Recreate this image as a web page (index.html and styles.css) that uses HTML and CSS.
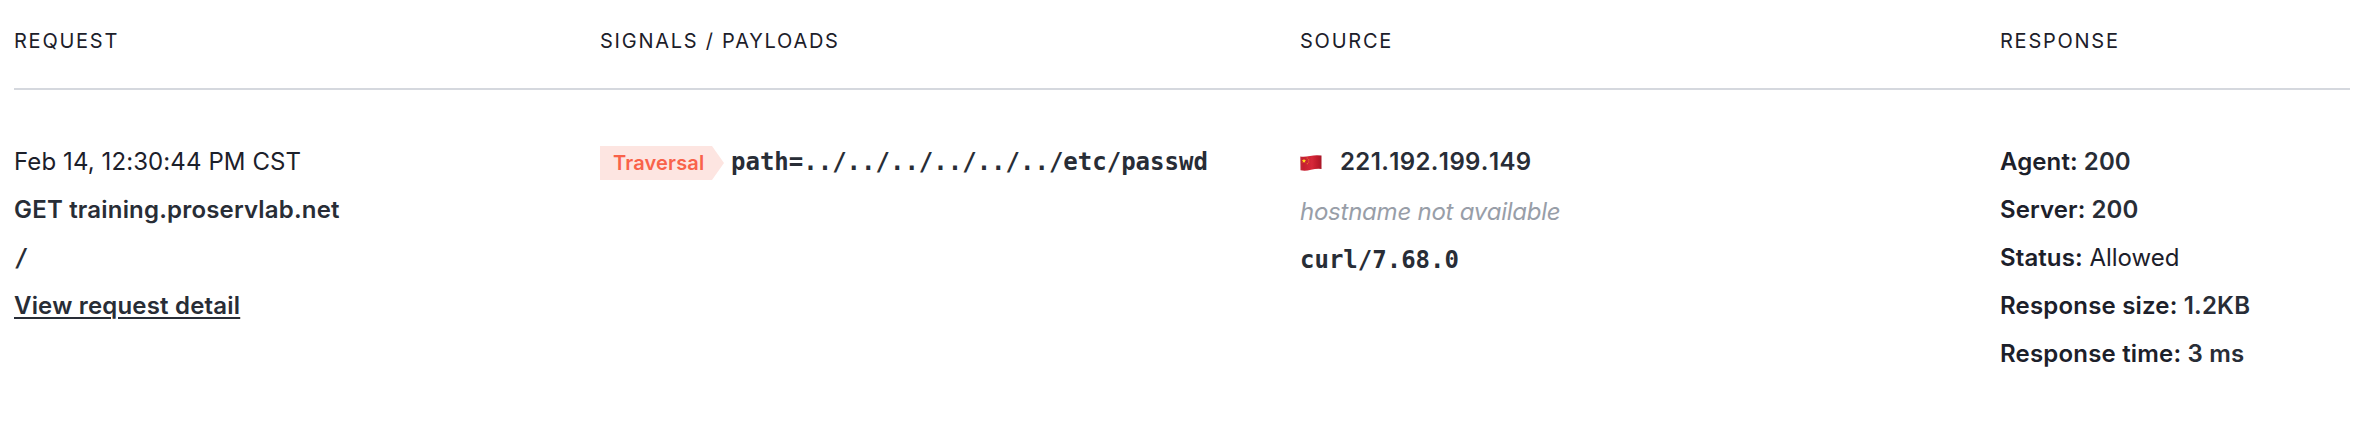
FILE: index.html
```html
<!DOCTYPE html>
<html lang="en"><head><meta charset="utf-8"><title>Requests</title><link rel="stylesheet" href="styles.css"></head>
<body>
<main class="requests">
<header class="grid head"><div class="request">REQUEST</div><div class="signals">SIGNALS / PAYLOADS</div><div class="source">SOURCE</div><div class="response">RESPONSE</div></header>
<section class="grid row">
<div class="request"><p class="date">Feb 14, 12:30:44 PM CST</p><p class="strong value">GET training.proservlab.net</p><p class="mono">/</p><p><a class="strong link" href="#">View request detail</a></p></div>
<div class="signals"><p class="payload"><span class="tag">Traversal</span><code class="mono">path=../../../../../../etc/passwd</code></p></div>
<div class="source"><p class="ip"><svg class="flag" viewBox="0 0 22 16"><defs><linearGradient id="cloth"><stop offset="0" stop-color="#c02a3a"/><stop offset=".15" stop-color="#c61f2f"/><stop offset=".55" stop-color="#d6283a"/><stop offset=".8" stop-color="#c01b2c"/><stop offset="1" stop-color="#a81728"/></linearGradient></defs><path fill="url(#cloth)" d="M.3 1.500Q4 2.300 10 1T21.500.6V14Q17 13.300 11 14.800T.5 15.200Z"/><path fill="#ffd51e" d="m4 3.700.6 1.300 1.400.2-1 1 .2 1.500L4 7l-1.300.7.2-1.500-1-1 1.500-.2z"/><g fill="#e88725"><circle cx="7.200" cy="3" r=".6"/><circle cx="8.700" cy="4.800" r=".6"/><circle cx="8.700" cy="7" r=".6"/><circle cx="7.300" cy="8.700" r=".6"/></g></svg><span class="strong value address">221.192.199.149</span></p><p class="hostname">hostname not available</p><p class="mono agent">curl/7.68.0</p></div>
<div class="response"><p class="strong short">Agent: <span class="value">200</span></p><p class="strong short">Server: <span class="value">200</span></p><p><span class="strong short">Status:</span> <span class="allowed">Allowed</span></p><p class="strong">Response size: <span class="value">1.2KB</span></p><p class="strong">Response time: <span class="value">3 ms</span></p></div>
</section>
</main>
</body></html>
```
FILE: styles.css
```css
*{box-sizing:border-box}
body{margin:0;background:#fff;color:#1c202a;font:24px/48px Inter,sans-serif}
.requests{padding:0 10px 0 14px}
.grid{display:grid;grid-template-columns:586px 700px 700px 1fr}
.head{height:90px;padding-top:17px;border-bottom:2px solid #d5d8de;font-size:20px;letter-spacing:1.75px}
.row{padding-top:48px}
p{margin:0;height:48px;white-space:nowrap}
.date{letter-spacing:.1px}
.strong{font-weight:600;letter-spacing:.19px}
.short{letter-spacing:.1px}
.value,.link,.mono{color:#282d36}
.link{text-decoration-thickness:2px;text-underline-offset:3px}
.mono{font:bold 24px/48px "DejaVu Sans Mono",monospace}
.payload,.ip{display:flex;align-items:center}
.tag{width:124px;height:34px;margin:2px 7px 0 0;padding-left:13px;background:#fde5e1;color:#f9624a;font-size:20px;font-weight:600;letter-spacing:.18px;line-height:34px;clip-path:polygon(0 0,112px 0,100% 50%,112px 100%,0 100%)}
.flag{width:22px;height:16px;margin:2px 18px 0 0}
.address{font-kerning:none;letter-spacing:.38px}
.hostname{height:50px;padding-top:2px;color:#989ea8;font-style:italic;letter-spacing:-.24px}
```
